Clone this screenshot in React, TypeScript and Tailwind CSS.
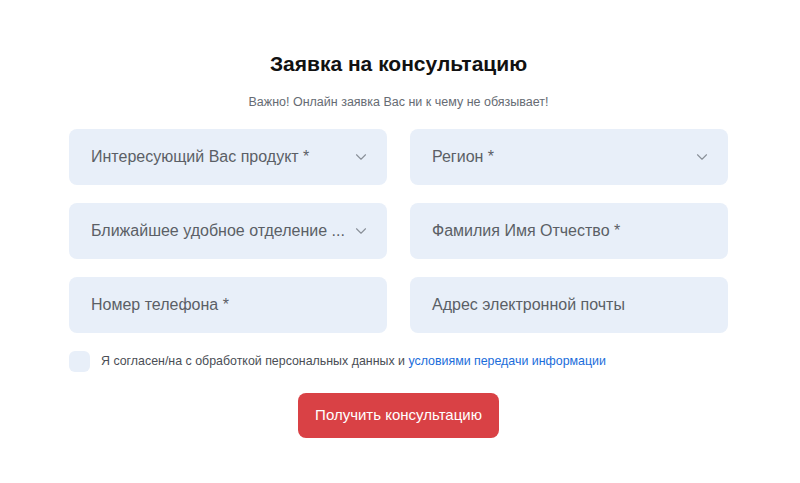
import { ChevronDown } from "lucide-react";

type Field = { label: string; select?: boolean };

const FIELDS: Field[] = [
  { label: "Интересующий Вас продукт *", select: true },
  { label: "Регион *", select: true },
  { label: "Ближайшее удобное отделение ...", select: true },
  { label: "Фамилия Имя Отчество *" },
  { label: "Номер телефона *" },
  { label: "Адрес электронной почты" },
];

function FormField({ label, select }: Field) {
  return (
    <div className="flex h-[56px] items-center rounded-[8px] bg-[#e8eff9] pl-[22px] pr-[17px]">
      <span className="min-w-0 flex-1 whitespace-nowrap text-[16px] text-[#5b5f66]">{label}</span>
      {select && (
        <ChevronDown className="ml-2 h-[18px] w-[18px] shrink-0 text-[#8a9099]" strokeWidth={1.5} />
      )}
    </div>
  );
}

export default function App() {
  return (
    <div className="flex min-h-[483px] w-full justify-center bg-white font-['Liberation_Sans',Arial,sans-serif]">
      <div className="mr-[3px] flex w-[659px] flex-col items-center pt-[50px]">
        <h1 className="text-[21px] font-bold leading-[28px] text-[#111]">Заявка на консультацию</h1>
        <p className="mt-[16px] text-[12.5px] leading-[16px] text-[#666b73]">
          Важно! Онлайн заявка Вас ни к чему не обязывает!
        </p>
        <div className="mt-[19px] grid w-full grid-cols-2 gap-x-[23px] gap-y-[18px]">
          {FIELDS.map((f) => (
            <FormField key={f.label} {...f} />
          ))}
        </div>
        <label className="mt-[18px] flex w-full items-center gap-[11px]">
          <span className="h-[21px] w-[21px] shrink-0 rounded-[6px] bg-[#e8eff9]" />
          <span className="text-[12.4px] text-[#4a4e55]">
            Я согласен/на с обработкой персональных данных и{" "}
            <a className="text-[#1a6ddb]">условиями передачи информации</a>
          </span>
        </label>
        <button className="mt-[21px] h-[45px] w-[201px] rounded-[8px] bg-[#d94145] text-[15px] text-white">
          Получить консультацию
        </button>
      </div>
    </div>
  );
}
